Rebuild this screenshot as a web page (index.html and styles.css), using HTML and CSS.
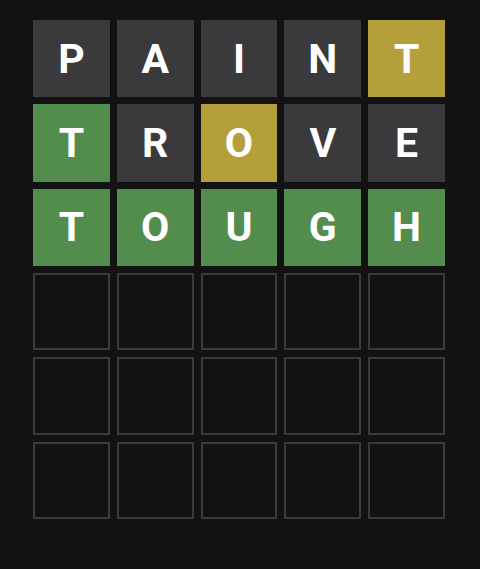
FILE: index.html
```html
<!DOCTYPE html>
<html>
<head>
<meta charset="utf-8">
<link rel="stylesheet" href="styles.css">
</head>
<body>
<div class="board">
  <div class="tile absent">P</div>
  <div class="tile absent">A</div>
  <div class="tile absent">I</div>
  <div class="tile absent">N</div>
  <div class="tile present">T</div>

  <div class="tile correct">T</div>
  <div class="tile absent">R</div>
  <div class="tile present">O</div>
  <div class="tile absent">V</div>
  <div class="tile absent">E</div>

  <div class="tile correct">T</div>
  <div class="tile correct">O</div>
  <div class="tile correct">U</div>
  <div class="tile correct">G</div>
  <div class="tile correct">H</div>

  <div class="tile empty"></div>
  <div class="tile empty"></div>
  <div class="tile empty"></div>
  <div class="tile empty"></div>
  <div class="tile empty"></div>

  <div class="tile empty"></div>
  <div class="tile empty"></div>
  <div class="tile empty"></div>
  <div class="tile empty"></div>
  <div class="tile empty"></div>

  <div class="tile empty"></div>
  <div class="tile empty"></div>
  <div class="tile empty"></div>
  <div class="tile empty"></div>
  <div class="tile empty"></div>
</div>
</body>
</html>
```
FILE: styles.css
```css
html, body {
  margin: 0;
  padding: 0;
  background: #121213;
  height: 100%;
}
body {
  padding: 20px 0 0 33px;
  box-sizing: border-box;
}
.board {
  width: 412px;
  height: 499px;
  display: grid;
  grid-template-columns: repeat(5, 1fr);
  grid-template-rows: repeat(6, 1fr);
  gap: 7px;
}
.tile {
  display: flex;
  align-items: center;
  justify-content: center;
  font-family: Roboto, "Liberation Sans", sans-serif;
  font-weight: 700;
  font-size: 41px;
  color: #ffffff;
  text-transform: uppercase;
  box-sizing: border-box;
}
.absent { background: #3a3a3c; }
.present { background: #b59f3b; }
.correct { background: #538d4e; }
.empty { border: 2px solid #3a3a3c; }
```
